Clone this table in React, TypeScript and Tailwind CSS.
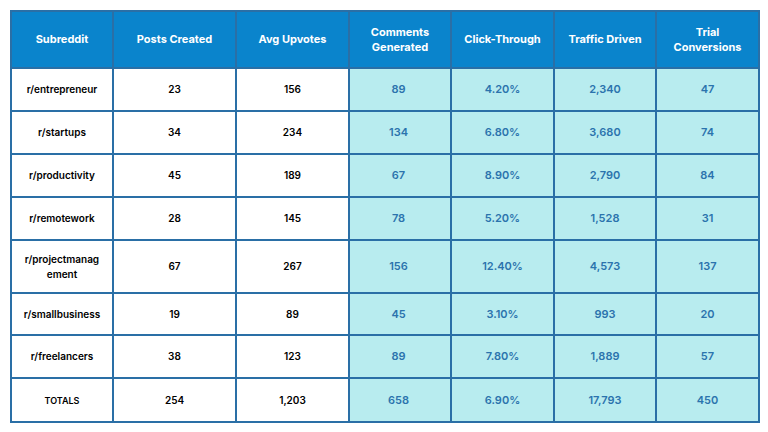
const rows = [
  { name: 'r/entrepreneur', posts: '23', up: '156', com: '89', ctr: '4.20%', traffic: '2,340', trial: '47', h: 'h-[43px]' },
  { name: 'r/startups', posts: '34', up: '234', com: '134', ctr: '6.80%', traffic: '3,680', trial: '74', h: 'h-[43px]' },
  { name: 'r/productivity', posts: '45', up: '189', com: '67', ctr: '8.90%', traffic: '2,790', trial: '84', h: 'h-[43px]' },
  { name: 'r/remotework', posts: '28', up: '145', com: '78', ctr: '5.20%', traffic: '1,528', trial: '31', h: 'h-[43px]' },
  { name: 'r/projectmanag\nement', posts: '67', up: '267', com: '156', ctr: '12.40%', traffic: '4,573', trial: '137', h: 'h-[53px]' },
  { name: 'r/smallbusiness', posts: '19', up: '89', com: '45', ctr: '3.10%', traffic: '993', trial: '20', h: 'h-[42px]' },
  { name: 'r/freelancers', posts: '38', up: '123', com: '89', ctr: '7.80%', traffic: '1,889', trial: '57', h: 'h-[43px]' },
  { name: 'TOTALS', posts: '254', up: '1,203', com: '658', ctr: '6.90%', traffic: '17,793', trial: '450', h: 'h-[44px]' },
]

const headers = ['Subreddit', 'Posts Created', 'Avg Upvotes', 'Comments\nGenerated', 'Click-Through', 'Traffic Driven', 'Trial\nConversions']
const widths = ['w-[102px]', 'w-[123px]', 'w-[113px]', 'w-[102px]', 'w-[103px]', 'w-[102px]', 'w-[103px]']

// teal metric cells share one look
const metric = 'border-2 border-[#2a6fa6] bg-[#b8ecef] text-center text-[11px] font-semibold text-[#2b73ad]'

export default function App() {
  return (
    <div className="w-[768px] h-[432px] bg-white pt-[10px] pl-[10px]" style={{ fontFamily: 'Inter, "Noto Sans", sans-serif' }}>
      <table className="border-collapse table-fixed w-[748px] border-2 border-[#2a6fa6]">
        <colgroup>
          {widths.map((w, i) => (
            <col key={i} className={w} />
          ))}
        </colgroup>
        <thead>
          <tr className="h-[57px] bg-[#0a84cc]">
            {headers.map((h) => (
              <th key={h} className="border-2 border-[#2a6fa6] px-1 text-[11px] font-bold leading-[15px] text-white text-center whitespace-pre-line">
                {h}
              </th>
            ))}
          </tr>
        </thead>
        <tbody>
          {rows.map((r) => {
            const total = r.name === 'TOTALS'
            return (
              <tr key={r.name} className={r.h}>
                <td className={`border-2 border-[#2a6fa6] text-center text-black font-semibold leading-[15px] whitespace-pre-line ${total ? 'text-[9px]' : 'text-[10px]'}`}>
                  {r.name}
                </td>
                <td className="border-2 border-[#2a6fa6] text-center text-[10px] font-semibold text-black">{r.posts}</td>
                <td className="border-2 border-[#2a6fa6] text-center text-[10px] font-semibold text-black">{r.up}</td>
                <td className={`${metric} pr-[3px]`}>{r.com}</td>
                <td className={metric}>{r.ctr}</td>
                <td className={metric}>{r.traffic}</td>
                <td className={metric}>{r.trial}</td>
              </tr>
            )
          })}
        </tbody>
      </table>
    </div>
  )
}
